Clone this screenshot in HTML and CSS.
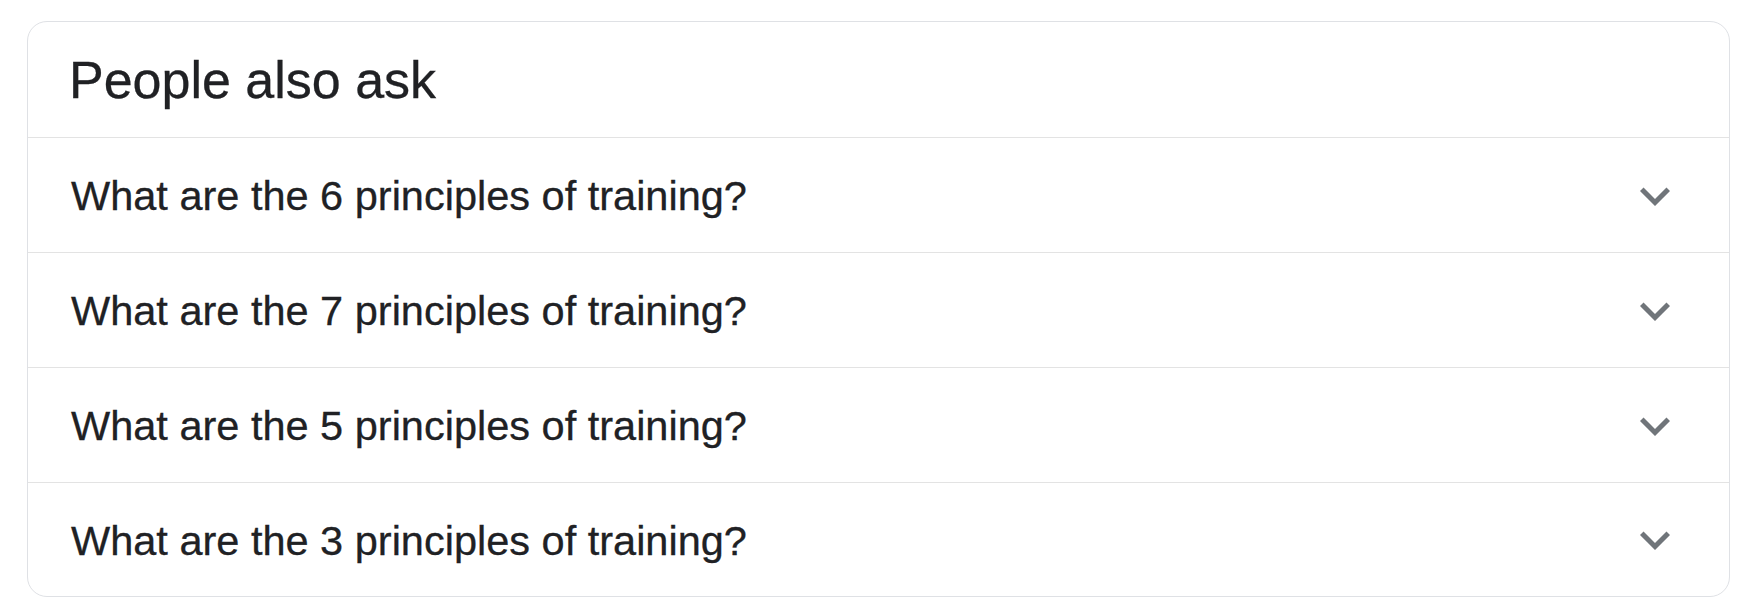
FILE: index.html
```html
<!DOCTYPE html>
<html lang="en">
<head>
<meta charset="utf-8">
<title>People also ask</title>
<link rel="stylesheet" href="styles.css">
</head>
<body>
<div class="page">
  <section class="paa">
    <h2 class="paa-title">People also ask</h2>
    <div class="paa-row">
      <span class="paa-q">What are the 6 principles of training?</span>
      <svg class="chev" viewBox="0 0 24 24"><path d="M16.59 8.59L12 13.17 7.41 8.59 6 10l6 6 6-6z"/></svg>
    </div>
    <div class="paa-row">
      <span class="paa-q">What are the 7 principles of training?</span>
      <svg class="chev" viewBox="0 0 24 24"><path d="M16.59 8.59L12 13.17 7.41 8.59 6 10l6 6 6-6z"/></svg>
    </div>
    <div class="paa-row">
      <span class="paa-q">What are the 5 principles of training?</span>
      <svg class="chev" viewBox="0 0 24 24"><path d="M16.59 8.59L12 13.17 7.41 8.59 6 10l6 6 6-6z"/></svg>
    </div>
    <div class="paa-row">
      <span class="paa-q">What are the 3 principles of training?</span>
      <svg class="chev" viewBox="0 0 24 24"><path d="M16.59 8.59L12 13.17 7.41 8.59 6 10l6 6 6-6z"/></svg>
    </div>
  </section>
</div>
</body>
</html>
```

FILE: styles.css
```css
html, body {
  margin: 0;
  padding: 0;
  background: #ffffff;
}

.page {
  padding: 21px 28px 0 27px;
  font-family: "Liberation Sans", Arial, sans-serif;
  color: #202124;
}

.paa {
  width: 1703px;
  box-sizing: border-box;
  border: 1px solid #dfe1e5;
  border-radius: 20px;
  overflow: hidden;
}

.paa-title {
  margin: 0;
  height: 116px;
  box-sizing: border-box;
  padding: 29px 44px 0 41px;
  font-size: 52px;
  line-height: 58px;
  font-weight: normal;
  -webkit-text-stroke: 0.3px #202124;
  border-bottom: 1px solid #e3e3e3;
}

.paa-row {
  display: flex;
  align-items: center;
  justify-content: space-between;
  height: 114px;
  box-sizing: border-box;
  padding: 1px 44px 0 43px;
}

.paa-row + .paa-row {
  height: 115px;
  border-top: 1px solid #e3e3e3;
}

.paa-row:last-child {
  height: 114px;
}

.paa-q {
  font-size: 41.5px;
  line-height: 47px;
  -webkit-text-stroke: 0.3px #202124;
}

.chev {
  width: 60px;
  height: 60px;
  fill: #70757a;
  flex: none;
}
```
